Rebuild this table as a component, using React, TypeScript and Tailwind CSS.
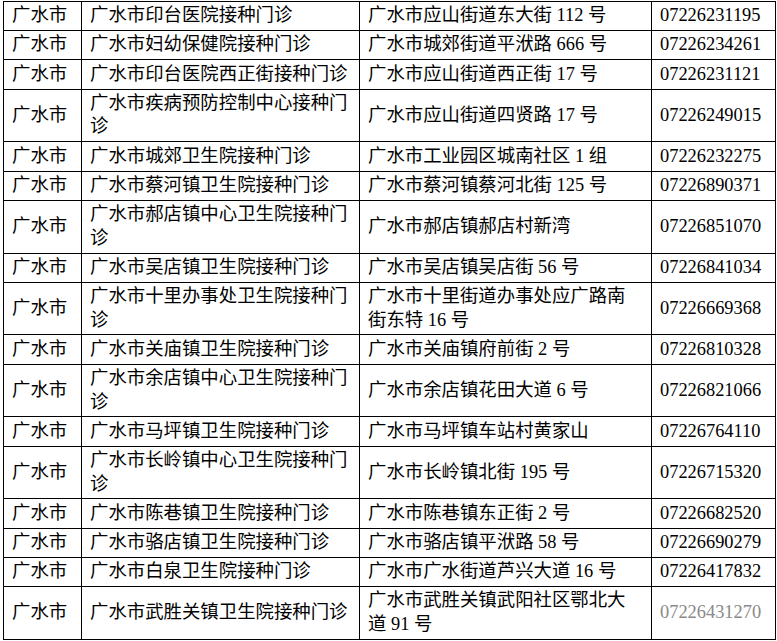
const rows: [string, string, string][] = [
  ['广水市印台医院接种门诊', '广水市应山街道东大街 112 号', '07226231195'],
  ['广水市妇幼保健院接种门诊', '广水市城郊街道平洑路 666 号', '07226234261'],
  ['广水市印台医院西正街接种门诊', '广水市应山街道西正街 17 号', '07226231121'],
  ['广水市疾病预防控制中心接种门诊', '广水市应山街道四贤路 17 号', '07226249015'],
  ['广水市城郊卫生院接种门诊', '广水市工业园区城南社区 1 组', '07226232275'],
  ['广水市蔡河镇卫生院接种门诊', '广水市蔡河镇蔡河北街 125 号', '07226890371'],
  ['广水市郝店镇中心卫生院接种门诊', '广水市郝店镇郝店村新湾', '07226851070'],
  ['广水市吴店镇卫生院接种门诊', '广水市吴店镇吴店街 56 号', '07226841034'],
  ['广水市十里办事处卫生院接种门诊', '广水市十里街道办事处应广路南街东特 16 号', '07226669368'],
  ['广水市关庙镇卫生院接种门诊', '广水市关庙镇府前街 2 号', '07226810328'],
  ['广水市余店镇中心卫生院接种门诊', '广水市余店镇花田大道 6 号', '07226821066'],
  ['广水市马坪镇卫生院接种门诊', '广水市马坪镇车站村黄家山', '07226764110'],
  ['广水市长岭镇中心卫生院接种门诊', '广水市长岭镇北街 195 号', '07226715320'],
  ['广水市陈巷镇卫生院接种门诊', '广水市陈巷镇东正街 2 号', '07226682520'],
  ['广水市骆店镇卫生院接种门诊', '广水市骆店镇平洑路 58 号', '07226690279'],
  ['广水市白泉卫生院接种门诊', '广水市广水街道芦兴大道 16 号', '07226417832'],
  ['广水市武胜关镇卫生院接种门诊', '广水市武胜关镇武阳社区鄂北大道 91 号', '07226431270'],
]

const cell = 'border border-black px-2 py-[2.3px] align-middle leading-[23.6px]'

export default function App() {
  return (
    <div className="min-h-screen bg-white pl-[3px] pt-px">
      <table
        className="table-fixed border-collapse w-[772px] text-[18.4px] text-black"
        style={{ fontFamily: '"Liberation Serif", "Noto Sans CJK SC", serif' }}
      >
        <colgroup>
          <col className="w-[78px]" />
          <col className="w-[278px]" />
          <col className="w-[292px]" />
          <col className="w-[124px]" />
        </colgroup>
        <tbody>
          {rows.map(([name, addr, phone], i) => (
            <tr key={i}>
              <td className={cell}>广水市</td>
              <td className={cell}>{name}</td>
              <td className={cell}>{addr}</td>
              <td className={`${cell} ${i === rows.length - 1 ? 'text-[#8a8a8a]' : ''}`}>{phone}</td>
            </tr>
          ))}
        </tbody>
      </table>
    </div>
  )
}
